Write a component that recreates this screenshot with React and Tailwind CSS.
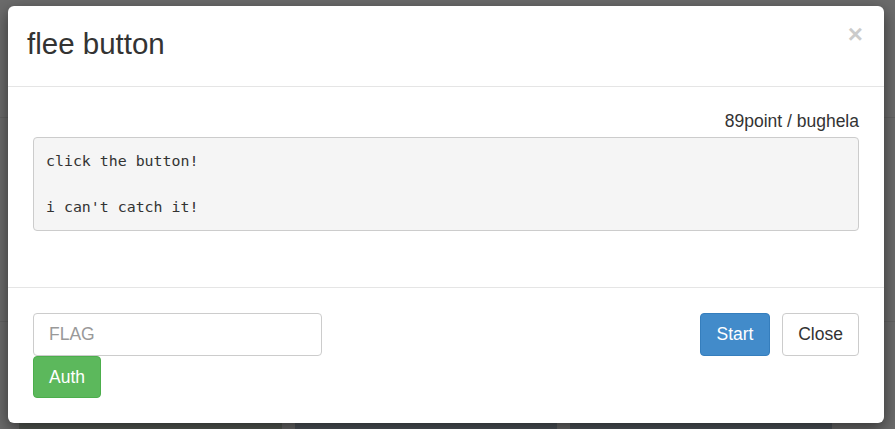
import React from "react";

const sans = { fontFamily: '"Liberation Sans", Arial, sans-serif' };

function Backdrop() {
  return (
    <div className="flex h-[429px] w-[895px] flex-col bg-[#6b6b6b]">
      <div className="h-[118px] border-b border-[#626262]" />
      <div className="h-[204px] border-b border-[#626262]" />
      <div className="flex-1" />
      <div className="flex h-[6px] gap-[13px] pl-[19px]">
        <div className="w-[263px] bg-[#565b55]" />
        <div className="w-[262px] bg-[#4f555b]" />
        <div className="w-[262px] bg-[#4f555b]" />
      </div>
    </div>
  );
}

function FleeModal() {
  return (
    <div
      style={sans}
      className="absolute left-[8px] top-[6px] flex h-[417px] w-[876px] flex-col rounded-[6px] bg-white text-[#333] shadow-[0_5px_15px_rgba(0,0,0,0.5)]"
    >
      <div className="relative h-[81px] border-b border-[#e5e5e5] px-[19px] pt-[21px]">
        <h3 className="text-[29.5px] leading-[33px]">flee button</h3>
        <span className="absolute right-[21px] top-[15px] text-[26px] font-bold leading-none text-black opacity-20">
          ×
        </span>
      </div>

      <div className="h-[201px] border-b border-[#e5e5e5] px-[25px] pt-[22px]">
        <div className="text-right text-[17.5px] leading-[25px]">89point / bughela</div>
        <pre
          style={{ fontFamily: '"DejaVu Sans Mono", monospace' }}
          className="mt-[3px] rounded-[4px] border border-[#ccc] bg-[#f5f5f5] px-[12px] pb-[11px] pt-[12px] text-[14.9px] leading-[23px] text-[#333]"
        >
          {"click the button!\n\ni can't catch it!"}
        </pre>
      </div>

      <div className="flex items-start justify-between px-[25px] pt-[25px]">
        <div className="flex flex-col">
          <input
            type="text"
            placeholder="FLAG"
            className="h-[43px] w-[289px] rounded-[4px] border border-[#ccc] px-[15px] text-[17.5px] text-[#555] placeholder:text-[#999]"
          />
          <button className="h-[42px] w-[68px] rounded-[4px] border border-[#4cae4c] bg-[#5cb85c] text-[17.5px] text-white">
            Auth
          </button>
        </div>
        <div className="flex gap-[12px]">
          <button className="h-[43px] w-[70px] rounded-[4px] border border-[#357ebd] bg-[#428bca] text-[17.5px] text-white">
            Start
          </button>
          <button className="h-[43px] w-[77px] rounded-[4px] border border-[#ccc] bg-white text-[17.5px] text-[#333]">
            Close
          </button>
        </div>
      </div>
    </div>
  );
}

export default function App() {
  return (
    <div className="relative h-[429px] w-[895px] overflow-hidden">
      <Backdrop />
      <FleeModal />
    </div>
  );
}
